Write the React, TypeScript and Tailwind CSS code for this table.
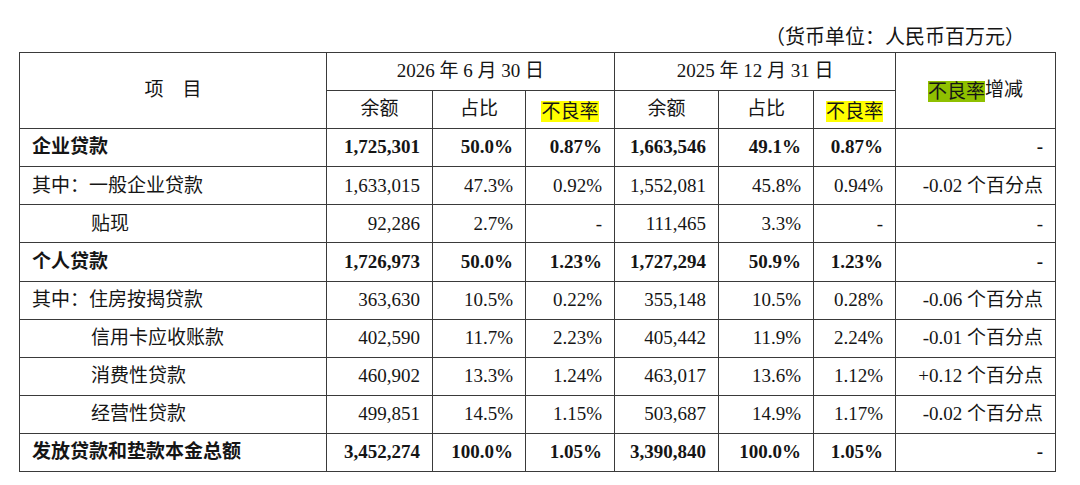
import React from "react";

type Row = {
  label: string;
  bold?: boolean;
  indent?: boolean;
  v: string[];
};

const rows: Row[] = [
  { label: "企业贷款", bold: true, v: ["1,725,301", "50.0%", "0.87%", "1,663,546", "49.1%", "0.87%", "-"] },
  { label: "其中：一般企业贷款", v: ["1,633,015", "47.3%", "0.92%", "1,552,081", "45.8%", "0.94%", "-0.02 个百分点"] },
  { label: "贴现", indent: true, v: ["92,286", "2.7%", "-", "111,465", "3.3%", "-", "-"] },
  { label: "个人贷款", bold: true, v: ["1,726,973", "50.0%", "1.23%", "1,727,294", "50.9%", "1.23%", "-"] },
  { label: "其中：住房按揭贷款", v: ["363,630", "10.5%", "0.22%", "355,148", "10.5%", "0.28%", "-0.06 个百分点"] },
  { label: "信用卡应收账款", indent: true, v: ["402,590", "11.7%", "2.23%", "405,442", "11.9%", "2.24%", "-0.01 个百分点"] },
  { label: "消费性贷款", indent: true, v: ["460,902", "13.3%", "1.24%", "463,017", "13.6%", "1.12%", "+0.12 个百分点"] },
  { label: "经营性贷款", indent: true, v: ["499,851", "14.5%", "1.15%", "503,687", "14.9%", "1.17%", "-0.02 个百分点"] },
  { label: "发放贷款和垫款本金总额", bold: true, v: ["3,452,274", "100.0%", "1.05%", "3,390,840", "100.0%", "1.05%", "-"] },
];

const cell = "border-[1.5px] border-[#3a3a3a] p-0";

function Hl({ children, green }: { children: React.ReactNode; green?: boolean }) {
  return (
    <span
      className={
        "inline-block h-[21px] leading-[21px] align-middle " +
        (green ? "bg-[#8fc000]" : "bg-[#ffff00]")
      }
    >
      {children}
    </span>
  );
}

export default function App() {
  return (
    <div
      className="w-[1080px] h-[485px] bg-white text-[#151515] text-[19px] overflow-hidden"
      style={{ fontFamily: '"Liberation Serif", "Noto Sans CJK SC", serif' }}
    >
      <div className="h-[52px] flex justify-end pr-[55px] pt-[27px] leading-[21px] text-[20px]">
        （货币单位：人民币百万元）
      </div>
      <table className="ml-[19px] w-[1036px] table-fixed border-collapse">
        <colgroup>
          <col className="w-[307px]" />
          <col className="w-[106px]" />
          <col className="w-[93px]" />
          <col className="w-[89px]" />
          <col className="w-[104px]" />
          <col className="w-[95px]" />
          <col className="w-[82px]" />
          <col className="w-[160px]" />
        </colgroup>
        <thead>
          <tr className="h-[38.1px]">
            <th rowSpan={2} className={cell + " font-normal text-center"}>
              项　目
            </th>
            <th colSpan={3} className={cell + " font-normal text-center"}>
              2026 年 6 月 30 日
            </th>
            <th colSpan={3} className={cell + " font-normal text-center"}>
              2025 年 12 月 31 日
            </th>
            <th rowSpan={2} className={cell + " font-normal text-center"}>
              <Hl green>不良率</Hl>增减
            </th>
          </tr>
          <tr className="h-[38.1px]">
            <th className={cell + " font-normal text-center"}>余额</th>
            <th className={cell + " font-normal text-center"}>占比</th>
            <th className={cell + " font-normal text-center"}>
              <Hl>不良率</Hl>
            </th>
            <th className={cell + " font-normal text-center"}>余额</th>
            <th className={cell + " font-normal text-center"}>占比</th>
            <th className={cell + " font-normal text-center"}>
              <Hl>不良率</Hl>
            </th>
          </tr>
        </thead>
        <tbody>
          {rows.map((r) => (
            <tr key={r.label} className={"h-[38.1px] " + (r.bold ? "font-bold" : "font-normal")}>
              <td className={cell + " text-left " + (r.indent ? "pl-[71px]" : "pl-[12px]")}>
                {r.label}
              </td>
              {r.v.map((x, i) => (
                <td key={i} className={cell + " text-right pr-[12px] whitespace-nowrap"}>
                  {x}
                </td>
              ))}
            </tr>
          ))}
        </tbody>
      </table>
    </div>
  );
}
